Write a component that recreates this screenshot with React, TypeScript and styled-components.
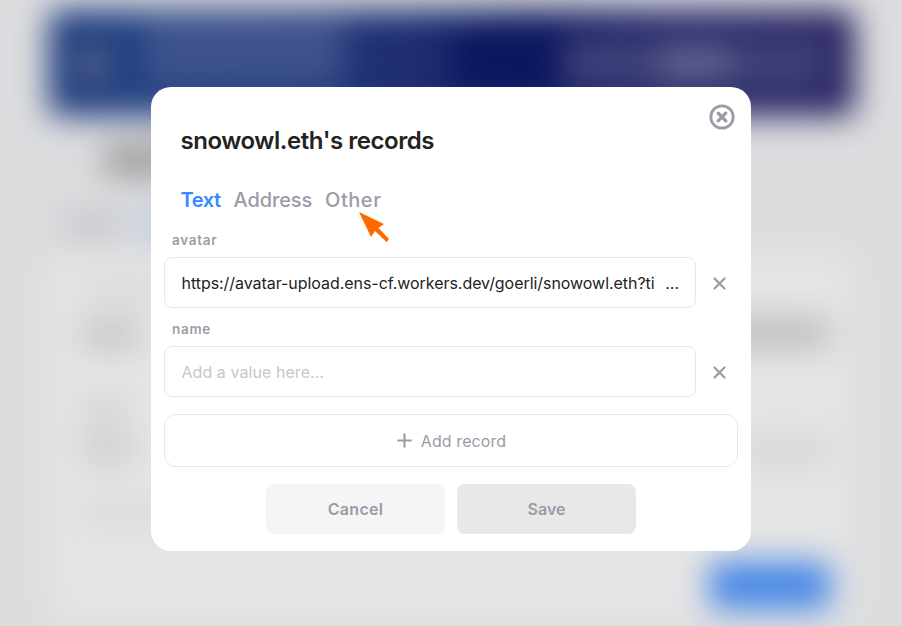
import React from "react";
import styled, { createGlobalStyle } from "styled-components";

const GlobalStyle = createGlobalStyle`
  * { box-sizing: border-box; }
  body { margin: 0; background: #dcdddf; overflow: hidden; }
  button, input { font: inherit; }
`;

const grey = "#9b9ba7";
const border = "#e8e8e8";

const Screen = styled.div`
  position: relative;
  width: 902px;
  height: 626px;
  overflow: hidden;
  background: #dcdddf;
  font-family: Inter, "Liberation Sans", sans-serif;
`;

/* Page behind the dialog */
const Page = styled.div`
  display: flex;
  flex-direction: column;
  width: 802px;
  height: 626px;
  margin: 0 auto;
  padding-top: 10px;
  filter: blur(16px);
`;

const Banner = styled.div`
  display: flex;
  align-items: flex-start;
  flex: none;
  height: 106px;
  margin: 0 -3px 0 -1px;
  border-radius: 8px;
  background: linear-gradient(90deg, #1c3a7e 0%, #213f80 12%, #1b2d72 44%, #0a165d 60%, #202266 76%, #28225f 100%);
`;

const Block = styled.div<{ $w: number; $h: number; $x?: number; $y?: number; $c: string }>`
  flex: none;
  width: ${(p) => p.$w}px;
  height: ${(p) => p.$h}px;
  margin: ${(p) => p.$y ?? 0}px 0 0 ${(p) => p.$x ?? 0}px;
  border-radius: 8px;
  background: ${(p) => p.$c};
`;

const BannerSearch = styled.div`
  display: flex;
  justify-content: center;
  align-items: center;
  width: 264px;
  height: 48px;
  margin: 29px 0 0 57px;
  background: #40427a;
`;

const PageRow = styled.div<{ $h: number }>`
  display: flex;
  flex: none;
  height: ${(p) => p.$h}px;
`;

const PageCard = styled.div`
  flex: none;
  height: 366px;
  padding: 24px 21px 0 24px;
  border-radius: 12px;
  background: #e5e5e5;
`;

const CardRow = styled.div<{ $h: number }>`
  display: flex;
  justify-content: space-between;
  height: ${(p) => p.$h}px;
`;

/* Dialog */
const Dialog = styled.section`
  position: absolute;
  top: 87px;
  left: 151px;
  display: flex;
  flex-direction: column;
  width: 600px;
  height: 464px;
  padding: 0 13px 17px;
  border-radius: 20px;
  background: #fff;
`;

const CloseButton = styled.button`
  position: absolute;
  top: 17px;
  right: 16.5px;
  display: flex;
  padding: 0;
  border: 0;
  background: none;
`;

const Title = styled.h1`
  margin: 37px 0 0 16.5px;
  color: #232323;
  font-size: 24px;
  font-weight: 600;
  line-height: 34px;
  letter-spacing: -0.46px;
`;

const Tabs = styled.nav`
  display: flex;
  height: 28px;
  margin: 29px 0 0 16.5px;
`;

const Tab = styled.span<{ $w: number; $spacing: number; $active?: boolean }>`
  width: ${(p) => p.$w}px;
  color: ${(p) => (p.$active ? "#3888ff" : grey)};
  font-size: 20px;
  font-weight: ${(p) => (p.$active ? 600 : 500)};
  line-height: 26px;
  letter-spacing: ${(p) => p.$spacing}px;
`;

const Fields = styled.div`
  height: 196px;
  margin-top: 15px;
  padding-top: 1px;
`;

const Field = styled.div`
  height: 89px;
`;

const Label = styled.label`
  display: block;
  height: 27px;
  padding-left: 8px;
  color: ${grey};
  font-size: 13.5px;
  font-weight: 600;
  line-height: 20px;
  letter-spacing: 0.7px;
`;

const FieldRow = styled.div`
  display: flex;
  align-items: center;
`;

const ValueBox = styled.div<{ $empty?: boolean }>`
  display: flex;
  align-items: center;
  justify-content: space-between;
  width: 532px;
  height: 51px;
  padding: 2px 16px 0 16.5px;
  border: 1px solid ${border};
  border-radius: 8px;
  color: ${(p) => (p.$empty ? "#c6c6cd" : "#232323")};
  font-size: 16px;
  letter-spacing: ${(p) => (p.$empty ? "0.06px" : "-0.05px")};
  white-space: nowrap;
`;

const RemoveButton = styled.button`
  display: flex;
  margin: 2px 0 0 17px;
  padding: 0;
  border: 0;
  background: none;
`;

const AddButton = styled.button`
  display: flex;
  align-items: center;
  justify-content: center;
  gap: 9px;
  flex: none;
  height: 53px;
  margin: 0;
  padding: 0 0 0 1px;
  border: 1px solid ${border};
  border-radius: 12px;
  background: #fff;
  color: ${grey};
  font-size: 16px;
  letter-spacing: 0.08px;
`;

const Actions = styled.footer`
  display: flex;
  justify-content: center;
  gap: 12px;
  margin-top: 17px;
`;

const ActionButton = styled.button<{ $primary?: boolean }>`
  width: 179px;
  height: 50px;
  border: 0;
  border-radius: 8px;
  background: ${(p) => (p.$primary ? "#e8e8e8" : "#f5f5f5")};
  color: ${grey};
  font-size: 16px;
  font-weight: 600;
  letter-spacing: ${(p) => (p.$primary ? "0" : "0.3px")};
`;

const Pointer = styled.svg`
  position: absolute;
  top: 211px;
  left: 358px;
`;

const RemoveIcon = () => (
  <svg width="13" height="13" viewBox="0 0 13 13" stroke={grey} strokeWidth="2.2" strokeLinecap="round">
    <path d="M1.5 1.5 11.5 11.5M11.5 1.5 1.5 11.5" />
  </svg>
);

export default function App() {
  return (
    <Screen>
      <GlobalStyle />
      <Page>
        <Banner>
          <Block $w={30} $h={36} $x={29} $y={36} $c="#5c678a" />
          <Block $w={200} $h={66} $x={36} $y={10} $c="#3e538d" />
          <Block $w={90} $h={24} $x={12} $y={40} $c="#24306f" />
          <Block $w={50} $h={50} $x={10} $y={25} $c="#0a165d" />
          <BannerSearch>
            <Block $w={70} $h={28} $c="#696a94" />
          </BannerSearch>
        </Banner>
        <PageRow $h={93}>
          <Block $w={150} $h={34} $x={53} $y={27} $c="#9e9e9f" />
        </PageRow>
        <PageRow $h={46}>
          <Block $w={60} $h={26} $x={12} $y={3} $c="#c5c6ca" />
          <Block $w={90} $h={30} $x={18} $y={1} $c="#b7cae6" />
        </PageRow>
        <PageCard>
          <CardRow $h={34}>
            <Block $w={90} $h={18} $x={6} $y={0} $c="#d6d6d6" />
          </CardRow>
          <CardRow $h={84}>
            <Block $w={62} $h={34} $x={6} $y={4} $c="#c9c9c9" />
            <Block $w={130} $h={32} $y={4} $c="#bebebe" />
          </CardRow>
          <CardRow $h={36}>
            <Block $w={50} $h={24} $x={6} $y={0} $c="#d2d2d4" />
          </CardRow>
          <CardRow $h={56}>
            <Block $w={55} $h={32} $x={6} $y={0} $c="#cecece" />
            <Block $w={90} $h={30} $y={2} $c="#d6d6d6" />
          </CardRow>
          <CardRow $h={73}>
            <Block $w={90} $h={26} $x={6} $y={10} $c="#dadada" />
          </CardRow>
          <CardRow $h={48}>
            <span />
            <Block $w={122} $h={47} $c="#4586e6" />
          </CardRow>
        </PageCard>
      </Page>

      <Dialog role="dialog">
        <CloseButton aria-label="Close">
          <svg width="26" height="26" viewBox="0 0 26 26" fill="none" stroke={grey}>
            <circle cx="13" cy="13" r="11.2" strokeWidth="2.8" />
            <path d="M9.2 9.2 16.8 16.8M16.8 9.2 9.2 16.8" strokeWidth="3.3" strokeLinecap="round" />
          </svg>
        </CloseButton>
        <Title>snowowl.eth's records</Title>
        <Tabs>
          <Tab $w={53} $spacing={-0.4} $active>Text</Tab>
          <Tab $w={91.5} $spacing={-0.1}>Address</Tab>
          <Tab $w={62} $spacing={0.55}>Other</Tab>
        </Tabs>
        <Fields>
          <Field>
            <Label>avatar</Label>
            <FieldRow>
              <ValueBox>
                <span>https://avatar-upload.ens-cf.workers.dev/goerli/snowowl.eth?ti</span>
                <span>...</span>
              </ValueBox>
              <RemoveButton aria-label="Remove avatar"><RemoveIcon /></RemoveButton>
            </FieldRow>
          </Field>
          <Field>
            <Label>name</Label>
            <FieldRow>
              <ValueBox $empty>Add a value here...</ValueBox>
              <RemoveButton aria-label="Remove name"><RemoveIcon /></RemoveButton>
            </FieldRow>
          </Field>
        </Fields>
        <AddButton>
          <svg width="15" height="15" viewBox="0 0 15 15" stroke={grey} strokeWidth="2.1" strokeLinecap="round">
            <path d="M7.5 1.2V13.8M1.2 7.5H13.8" />
          </svg>
          Add record
        </AddButton>
        <Actions>
          <ActionButton>Cancel</ActionButton>
          <ActionButton $primary>Save</ActionButton>
        </Actions>
      </Dialog>

      <Pointer width="32" height="32" viewBox="0 0 32 32">
        <path d="M1 1 26 13 20.5 17 31 28 28.5 31 17 20 13 26Z" fill="#ff6a00" />
      </Pointer>
    </Screen>
  );
}
